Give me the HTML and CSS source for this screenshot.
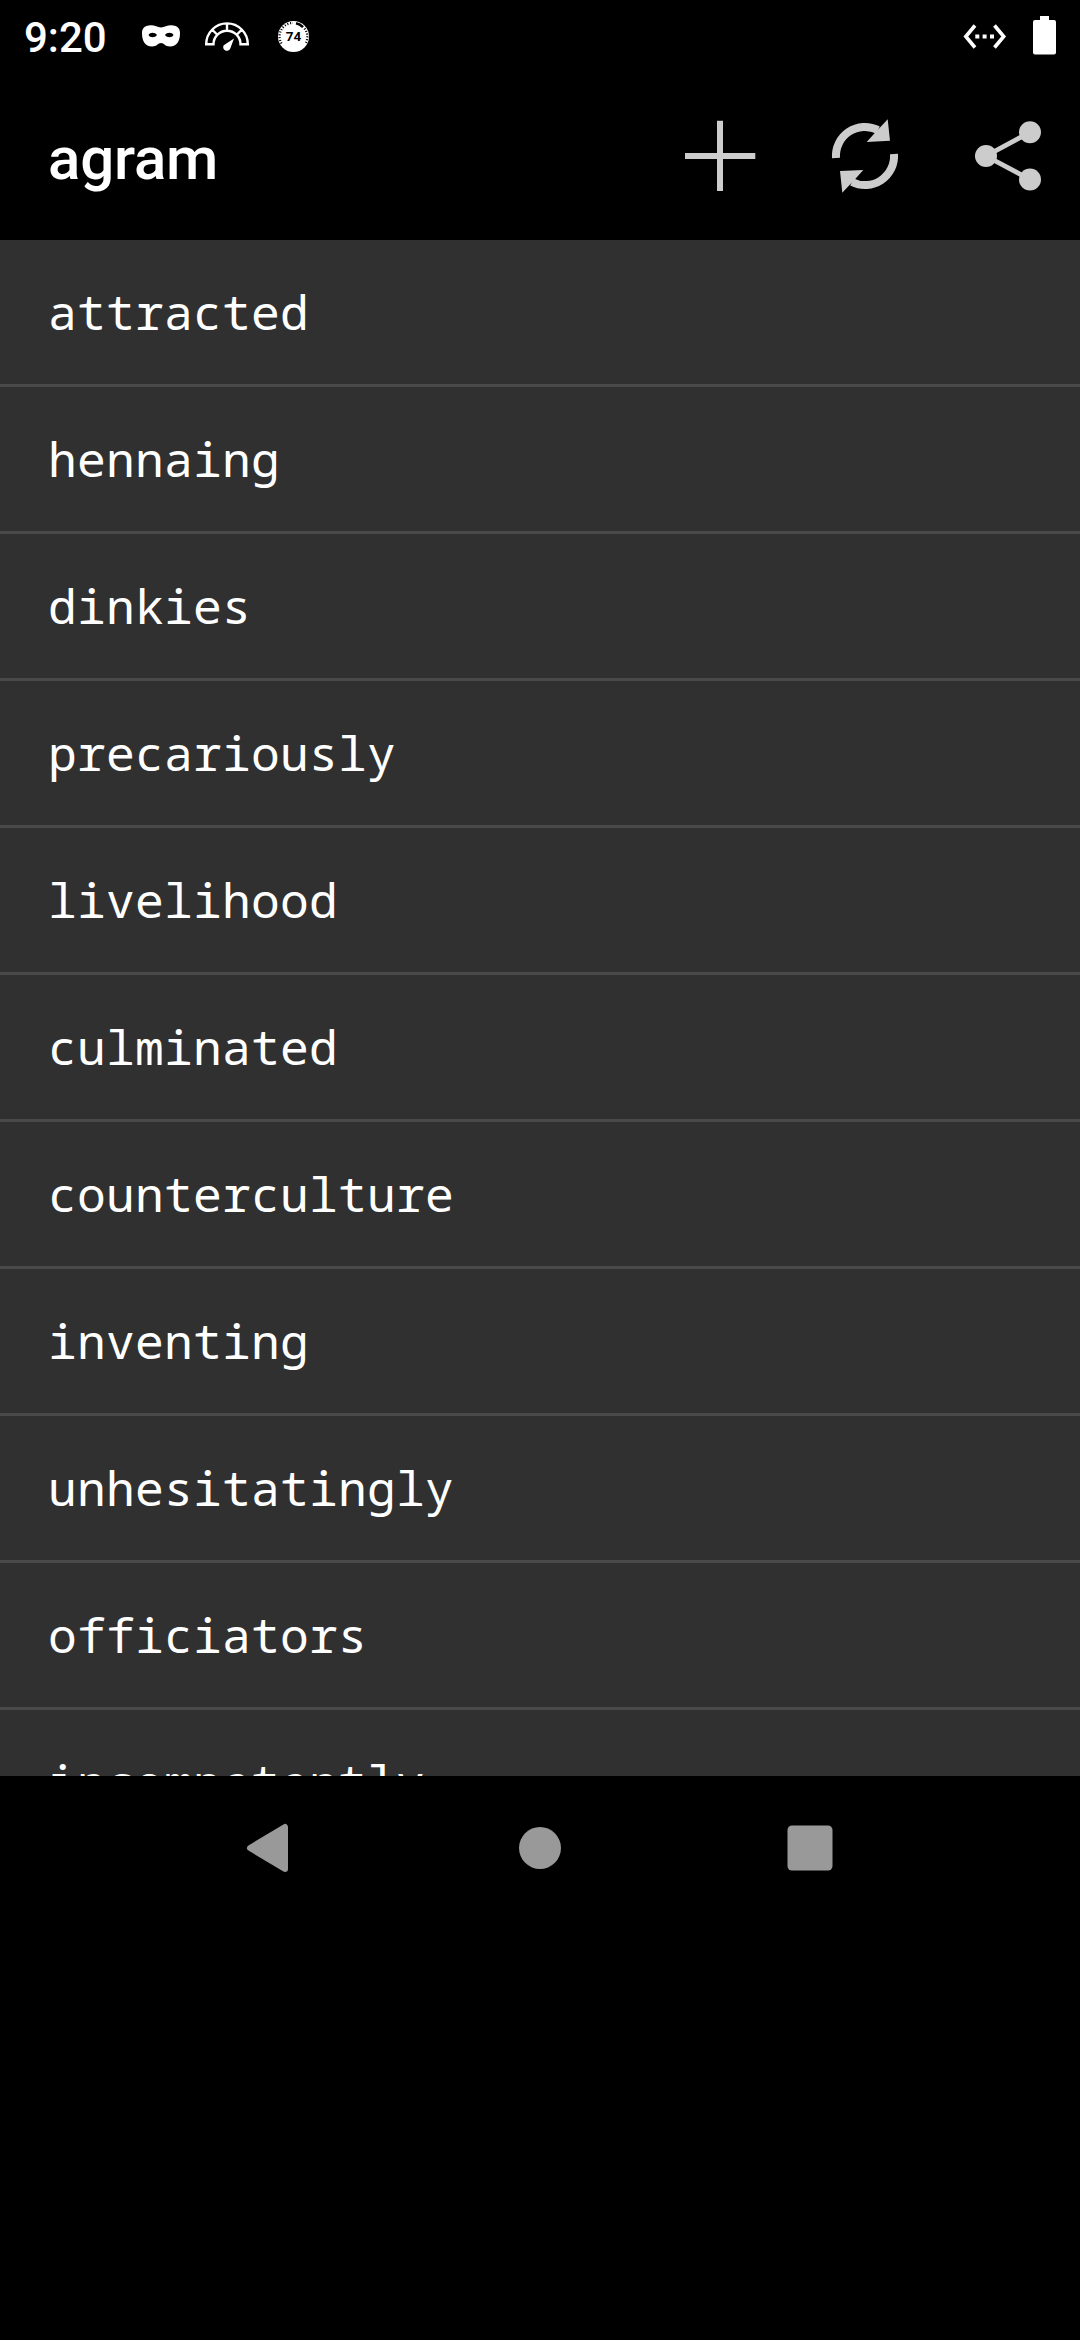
FILE: index.html
```html
<!DOCTYPE html>
<html lang="en">
<head>
<meta charset="utf-8">
<title>agram</title>
<link rel="stylesheet" href="styles.css">
</head>
<body>
<div class="screen">
  <header class="status-bar">
    <span class="clock">9:20</span>
    <svg class="status-icons" viewBox="136 0 180 72" aria-hidden="true">
      <path fill="#fff" fill-rule="evenodd" d="M149 25.500C154 24.500 157 27.500 161 27.500S168 24.500 173 25.500C178 26 180 29 180 33C180 41 177 46.500 170 46.500C165 46.500 164 43 161 43S157 46.500 152 46.500C145 46.500 142 41 142 33C142 29 144 26 149 25.500ZM148.500 35C150 32 155 32 157 35C155 38 150 38 148.500 35ZM165 35C167 32 172 32 173.500 35C172 38 167 38 165 35Z"/>
      <path fill="none" stroke="#fff" stroke-width="2.400" d="M206.200 44.200A20.800 20.800 0 0 1 247.800 44.200H240.500A13.500 13.500 0 0 0 213.500 44.200ZM227 23.500V31M212 29.500L217.500 35M242 29.500L236.500 35"/>
      <path fill="#fff" d="M234 38.500L230.300 48.500A3.700 3.700 0 1 1 223.700 45.200Z"/>
      <circle cx="293.500" cy="36.500" r="15.500" fill="#fff"/>
      <path fill="none" stroke="#000" stroke-width="2.200" stroke-dasharray="1.100 1.700" d="M281.500 43.500A13.600 13.600 0 0 1 293 22.900"/>
      <path fill="none" stroke="#000" stroke-width="2.600" d="M296 23.300A13.400 13.400 0 0 1 303 27.200"/>
      <path fill="none" stroke="#000" stroke-width="2.200" stroke-dasharray="1.100 1.700" d="M304.500 28.500A13.600 13.600 0 0 1 305.500 43.500"/>
      <text class="badge-text" x="293.600" y="41.300" text-anchor="middle">74</text>
    </svg>
    <svg class="system-icons" viewBox="956 0 104 72" aria-hidden="true">
      <path fill="none" stroke="#fff" stroke-width="3.600" d="M975 25.500L965.800 36.500L975 47.500M994.500 25.500L1003.700 36.500L994.500 47.500"/>
      <path fill="#fff" d="M975.300 34.500h4v4h-4zM982.600 34.500h4v4h-4zM990 34.500h4v4h-4z"/>
      <path fill="#fff" d="M1040 16h9v4h5a2 2 0 0 1 2 2v30.500a2 2 0 0 1-2 2h-19a2 2 0 0 1-2-2V22a2 2 0 0 1 2-2h5z"/>
    </svg>
  </header>
  <div class="app-bar">
    <h1 class="title">agram</h1>
    <svg class="action" viewBox="648 84 144 144" role="img" aria-label="Add"><path stroke="#ccc" stroke-width="6" d="M685 156H755.300M720 120.700V191"/></svg>
    <svg class="action" viewBox="792 84 144 144" role="img" aria-label="Refresh">
      <path fill="none" stroke="#ccc" stroke-width="8" d="M836 158A29 29 0 0 1 878 130M894 154A29 29 0 0 1 852 182"/>
      <path fill="#ccc" d="M887.700 119.300L890 140.700L866.700 142L875 132.700L880.700 126.700ZM842.300 192.700L840 171L863.300 170L855 179.300L849.300 185.300Z"/>
    </svg>
    <svg class="action" viewBox="936 84 144 144" role="img" aria-label="Share">
      <path fill="none" stroke="#ccc" stroke-width="4.800" d="M1030 132.300L986 156L1030 179.500"/>
      <g fill="#ccc"><circle cx="1030" cy="132.300" r="11"/><circle cx="986" cy="156" r="11"/><circle cx="1030" cy="179.500" r="11"/></g>
    </svg>
  </div>
  <ul class="words">
    <li class="word">attracted</li>
    <li class="word">hennaing</li>
    <li class="word">dinkies</li>
    <li class="word">precariously</li>
    <li class="word">livelihood</li>
    <li class="word">culminated</li>
    <li class="word">counterculture</li>
    <li class="word">inventing</li>
    <li class="word">unhesitatingly</li>
    <li class="word">officiators</li>
    <li class="word">incompetently</li>
  </ul>
  <nav class="nav-bar">
    <svg class="nav-icon" viewBox="0 0 54 54" aria-hidden="true"><path fill="#999" stroke="#999" stroke-width="6" stroke-linejoin="round" d="M7 27L42 6V48Z"/></svg>
    <svg class="nav-icon" viewBox="0 0 54 54" aria-hidden="true"><circle cx="27" cy="27" r="21" fill="#999"/></svg>
    <svg class="nav-icon" viewBox="0 0 54 54" aria-hidden="true"><rect x="4.500" y="4.500" width="45" height="45" rx="4.500" fill="#999"/></svg>
  </nav>
</div>
</body>
</html>
```
FILE: styles.css
```css
* { box-sizing: border-box; }
body {
  margin: 0;
  background: #000;
  color: #fff;
  font-family: Roboto, sans-serif;
}
.screen {
  display: flex;
  flex-direction: column;
  width: 1080px;
  height: 2340px;
  overflow: hidden;
  background: #000;
}
.status-bar {
  display: flex;
  align-items: center;
  height: 72px;
  padding: 0 20px 0 24px;
}
.clock {
  width: 112px;
  font-size: 42px;
  font-weight: 500;
  line-height: 72px;
  padding-top: 3px;
}
.status-icons { width: 180px; height: 72px; }
.badge-text { font: 700 13.5px Roboto, sans-serif; fill: #000; }
.system-icons { width: 104px; height: 72px; margin-left: auto; }
.app-bar {
  display: flex;
  align-items: center;
  height: 168px;
  padding-left: 48px;
}
.title {
  flex: 1;
  margin: 0;
  padding-top: 6px;
  font-size: 60px;
  font-weight: 500;
  line-height: 72px;
  letter-spacing: -0.2px;
}
.action { width: 144px; height: 144px; }
.words {
  height: 1536px;
  margin: 0;
  padding: 0;
  overflow: hidden;
  list-style: none;
  background: #303030;
}
.word {
  height: 147px;
  padding-left: 48px;
  border-bottom: 3px solid #494949;
  font: 48px/144px "Droid Sans Mono", "Noto Sans Mono", "DejaVu Sans Mono", monospace;
  letter-spacing: 0.2px;
}
.nav-bar {
  display: flex;
  align-items: center;
  justify-content: center;
  gap: 216px;
  height: 144px;
}
.nav-icon { width: 54px; height: 54px; }
```
